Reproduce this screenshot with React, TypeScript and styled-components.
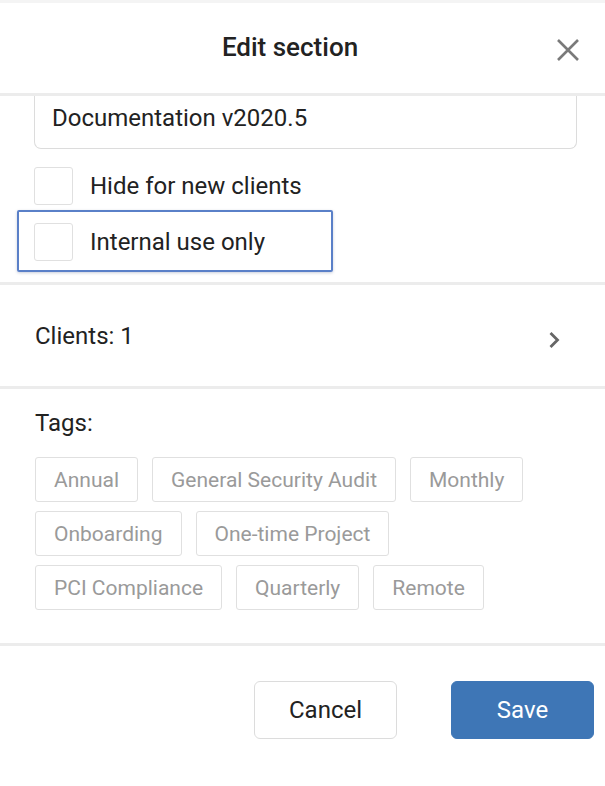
import React from "react";
import styled, {createGlobalStyle} from "styled-components";

const tags = [
    "Annual",
    "General Security Audit",
    "Monthly",
    "Onboarding",
    "One-time Project",
    "PCI Compliance",
    "Quarterly",
    "Remote",
];

const App = () => {
    return (
        <>
            <GlobalStyle/>
            <Modal>
                <Header>
                    <span/>
                    <Title>Edit section</Title>
                    <CloseButton aria-label="Close">
                        <svg width="24" height="24" viewBox="0 0 24 24">
                            <path d="M2 2 L22 22 M22 2 L2 22" stroke="#7a7a7a" strokeWidth="2.6" fill="none"/>
                        </svg>
                    </CloseButton>
                </Header>

                <FormSection>
                    <NameInput defaultValue="Documentation v2020.5"/>
                    <CheckRow>
                        <CheckBox/>
                        <CheckLabel>Hide for new clients</CheckLabel>
                    </CheckRow>
                    <FocusRing>
                        <CheckRow>
                            <CheckBox/>
                            <CheckLabel>Internal use only</CheckLabel>
                        </CheckRow>
                    </FocusRing>
                </FormSection>

                <ClientsRow>
                    <RowText>Clients: 1</RowText>
                    <Chevron width="14" height="20" viewBox="0 0 14 20">
                        <path d="M3.5 3 L10.5 10 L3.5 17" stroke="#666" strokeWidth="2.8" fill="none"/>
                    </Chevron>
                </ClientsRow>

                <TagsSection>
                    <RowText>Tags:</RowText>
                    <TagList>
                        {tags.map(tag => <Tag key={tag}>{tag}</Tag>)}
                    </TagList>
                </TagsSection>

                <Footer>
                    <Button>Cancel</Button>
                    <Button primary>Save</Button>
                </Footer>
            </Modal>
        </>
    )
};

const GlobalStyle = createGlobalStyle`
  body {
    margin: 0;
    background: #ffffff;
    font-family: Roboto, "Liberation Sans", sans-serif;
    color: #222222;
  }
`;

const Modal = styled.div`
  width: 605px;
  border-top: 3px solid #f4f4f4;
  display: flex;
  flex-direction: column;
`;

const Header = styled.div`
  height: 90px;
  display: grid;
  grid-template-columns: 1fr auto 1fr;
  align-items: center;
  border-bottom: 3px solid #ececec;
  padding-right: 25px;
`;

const Title = styled.h1`
  margin: 0 0 3px;
  font-size: 26px;
  font-weight: 500;
  color: #222;
`;

const CloseButton = styled.button`
  justify-self: end;
  background: none;
  border: none;
  padding: 0;
  display: flex;
  margin-top: 3px;
`;

const FormSection = styled.div`
  display: flex;
  flex-direction: column;
  padding: 0 28px 10px 34px;
  border-bottom: 3px solid #ececec;
`;

const NameInput = styled.input`
  height: 53px;
  box-sizing: border-box;
  border: 1px solid #dcdcdc;
  border-top: none;
  border-radius: 0 0 7px 7px;
  padding: 0 17px 9px;
  font-family: inherit;
  font-size: 24px;
  color: #222;
  outline: none;
  margin-bottom: 18px;
`;

const CheckRow = styled.label`
  display: flex;
  align-items: center;
  gap: 17px;
`;

const CheckBox = styled.span`
  width: 39px;
  height: 38px;
  box-sizing: border-box;
  border: 1px solid #e0e0e0;
  border-radius: 3px;
`;

const CheckLabel = styled.span`
  font-size: 24px;
  color: #222;
`;

const FocusRing = styled.div`
  width: 316px;
  box-sizing: border-box;
  margin: 5px 0 0 -17px;
  padding: 11px 15px 9px;
  border: 2px solid #5a80c8;
  border-radius: 2px;
  box-shadow: 0 1px 3px rgba(40, 60, 110, 0.25);
`;

const ClientsRow = styled.div`
  height: 101px;
  display: flex;
  align-items: center;
  justify-content: space-between;
  padding: 0 44px 0 35px;
  border-bottom: 3px solid #ececec;
`;

const Chevron = styled.svg`
  margin-top: 8px;
`;

const RowText = styled.span`
  font-size: 24px;
  color: #222;
`;

const TagsSection = styled.div`
  display: flex;
  flex-direction: column;
  gap: 20px;
  padding: 20px 30px 33px 35px;
  border-bottom: 3px solid #ececec;
`;

const TagList = styled.div`
  display: flex;
  flex-wrap: wrap;
  column-gap: 14px;
  row-gap: 9px;
`;

const Tag = styled.span`
  height: 45px;
  box-sizing: border-box;
  display: flex;
  align-items: center;
  padding: 0 18px;
  border: 1px solid #e0e0e0;
  border-radius: 3px;
  font-size: 21px;
  color: #9a9a9a;
`;

const Footer = styled.div`
  display: flex;
  justify-content: flex-end;
  gap: 54px;
  padding: 35px 11px 47px 0;
`;

const Button = styled.button<{primary?: boolean}>`
  width: 143px;
  height: 58px;
  border-radius: 6px;
  font-family: inherit;
  font-size: 24px;
  border: 1px solid ${p => p.primary ? "#3e76b6" : "#dcdcdc"};
  background: ${p => p.primary ? "#3e76b6" : "#ffffff"};
  color: ${p => p.primary ? "#ffffff" : "#222222"};
`;

export default App;
